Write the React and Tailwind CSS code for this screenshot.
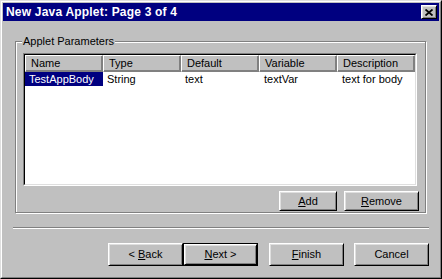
import React from "react";

function Btn({ children, def, w = "w-[75px]", h = "h-[23px]" }) {
  const inner = (
    <div
      className={`flex items-center justify-center h-full w-full border border-t-white border-l-white border-r-black border-b-black shadow-[inset_1px_1px_0_#dfdfdf,inset_-1px_-1px_0_#808080] bg-[#c0c0c0]`}
    >
      {children}
    </div>
  );
  if (def) {
    return <div className={`${w} ${h} border border-black`}>{inner}</div>;
  }
  return <div className={`${w} ${h}`}>{inner}</div>;
}

const cols = ["Name", "Type", "Default", "Variable", "Description"];
const row = ["TestAppBody", "String", "text", "textVar", "text for body"];

export default function App() {
  return (
    <div className="w-[442px] h-[279px] bg-[#c0c0c0] border border-t-[#dfdfdf] border-l-[#dfdfdf] border-r-black border-b-black font-['Liberation_Sans',Arial,sans-serif] text-[11px] text-black leading-none select-none">
      <div className="h-full border border-t-white border-l-white border-r-[#808080] border-b-[#808080] p-px flex flex-col">
        {/* Title bar */}
        <div className="h-[18px] bg-[#000080] flex items-center justify-between pl-[3px] pr-[2px] shrink-0">
          <span className="text-white font-bold text-[12px] tracking-[0.2px] leading-none">
            New Java Applet: Page 3 of 4
          </span>
          <div className="w-[16px] h-[14px] flex items-center justify-center border border-t-white border-l-white border-r-black border-b-black shadow-[inset_1px_1px_0_#dfdfdf,inset_-1px_-1px_0_#808080] bg-[#c0c0c0]">
            <svg width="8" height="7" viewBox="0 0 8 7">
              <path d="M0.5 0.5 L7.5 6.5 M7.5 0.5 L0.5 6.5" stroke="black" strokeWidth="1.8" fill="none" />
            </svg>
          </div>
        </div>

        {/* Group box */}
        <div className="relative mt-[20px] ml-[12px] w-[411px] h-[172px] border border-[#808080] shadow-[inset_1px_1px_0_#fff,1px_1px_0_#fff] shrink-0 flex flex-col">
          <span className="absolute left-[6px] top-[-7px] px-[1px] bg-[#c0c0c0] leading-[13px]">
            Applet Parameters
          </span>
          {/* List view */}
          <div className="ml-[7px] mt-[11px] w-[394px] h-[133px] border border-t-[#808080] border-l-[#808080] border-r-white border-b-white">
            <div className="h-full border border-t-black border-l-black border-r-[#dfdfdf] border-b-[#dfdfdf] bg-white flex flex-col">
              <div className="flex h-[17px] shrink-0">
                {cols.map((c) => (
                  <div
                    key={c}
                    className="w-[78px] h-full flex items-center pl-[5px] bg-[#c0c0c0] border border-t-white border-l-white border-r-[#808080] border-b-[#808080] shadow-[inset_-1px_-1px_0_#808080]"
                  >
                    {c}
                  </div>
                ))}
              </div>
              <div className="flex h-[14px] shrink-0">
                {row.map((c, i) => (
                  <div
                    key={i}
                    className={`w-[78px] h-full flex items-center ${i === 0 ? "bg-[#000080] text-white pl-[4px]" : i >= 3 ? "pl-[5px]" : "pl-[4px]"}`}
                  >
                    {c}
                  </div>
                ))}
              </div>
            </div>
          </div>
          <div className="flex justify-end gap-[7px] pr-[6px] mt-[5px]">
            <Btn w="w-[58px]" h="h-[20px]">
              <span><span className="underline">A</span>dd</span>
            </Btn>
            <Btn w="w-[75px]" h="h-[20px]">
              <span><span className="underline">R</span>emove</span>
            </Btn>
          </div>
        </div>

        {/* Separator */}
        <div className="mt-[14px] ml-[10px] w-[416px] h-[2px] border-t border-t-[#808080] border-b border-b-white shrink-0" />

        {/* Bottom buttons */}
        <div className="flex justify-end pr-[10px] mt-[14px]">
          <Btn>
            <span>&lt; <span className="underline">B</span>ack</span>
          </Btn>
          <Btn def>
            <span><span className="underline">N</span>ext &gt;</span>
          </Btn>
          <div className="w-[11px]" />
          <Btn>
            <span><span className="underline">F</span>inish</span>
          </Btn>
          <div className="w-[10px]" />
          <Btn>
            <span>Cancel</span>
          </Btn>
        </div>
      </div>
    </div>
  );
}
